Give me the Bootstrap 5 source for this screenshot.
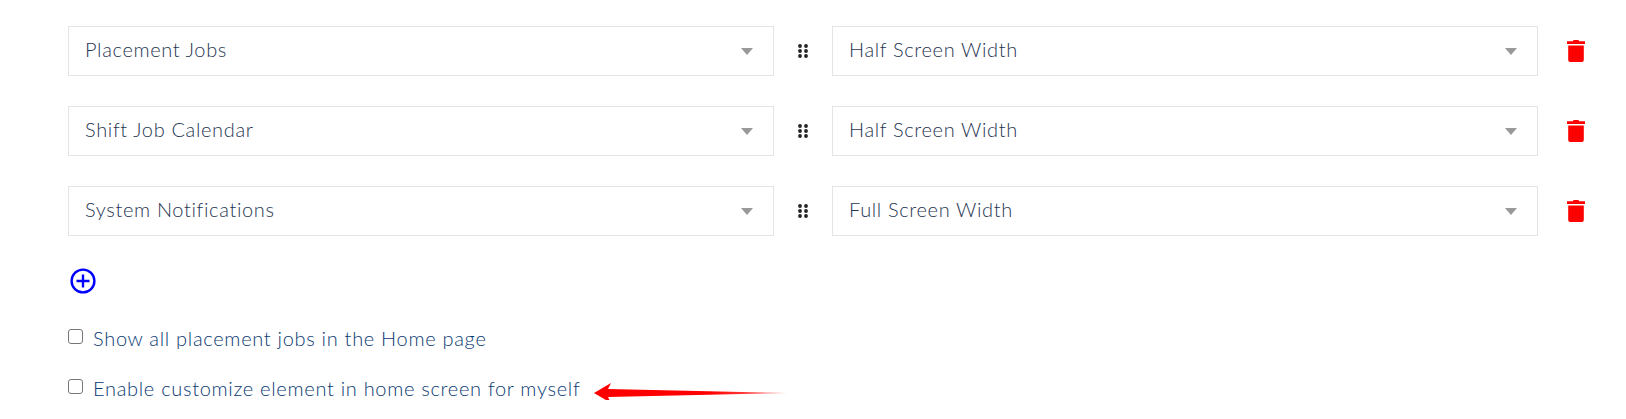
<!DOCTYPE html>
<html lang="en">
<head>
<meta charset="utf-8">
<title>Home screen elements</title>
<link href="https://cdn.jsdelivr.net/npm/bootstrap@5.3.0/dist/css/bootstrap.min.css" rel="stylesheet">
<style>
body{background:#fff;font-family:"Lato","Noto Sans",sans-serif;overflow:hidden}
.page-wrap{padding:26px 0 0 68px;width:1626px}
.elem-row{height:50px;margin-bottom:30px;display:flex;align-items:center}
.elem-select.form-select{height:50px;width:706px;flex:none;border:1px solid #e4e4e4;border-radius:0;padding:0 40px 4px 16px;font-size:20px;font-weight:300;color:#1f3552;letter-spacing:.65px;box-shadow:none;
background-image:url("data:image/svg+xml,%3Csvg xmlns='http://www.w3.org/2000/svg' width='12' height='7'%3E%3Cpath d='M0 0h12L6 7z' fill='%23999'/%3E%3C/svg%3E");background-size:12px 7px;background-position:right 20px center;background-repeat:no-repeat}
.elem-handle{width:58px;flex:none;display:flex;justify-content:center}
.elem-trash{margin-left:29px;flex:none;display:block}
.add-elem{display:block;padding:2px 0 0 2px;line-height:0}
.opt-row{display:flex;align-items:center;color:#0a3a72;font-size:20px;font-weight:300;letter-spacing:.7px;line-height:24px}
.opt-row .form-check-input{margin:0 10px 0 0;width:15px;height:15px;border:1px solid #767676;border-radius:3px;flex:none;position:relative;top:-2px}
.opt-first{margin-top:32px}
.opt-second{margin-top:26px}
.note-arrow{margin-left:14px;flex:none;position:relative;top:5px}
</style>
</head>
<body>
<div class="page-wrap">
  <div class="elem-row">
    <select class="form-select elem-select"><option>Placement Jobs</option></select>
    <div class="elem-handle"><svg width="10" height="14" viewBox="0 0 10 14"><g fill="#222"><circle cx="2" cy="2" r="1.9"/><circle cx="8" cy="2" r="1.9"/><circle cx="2" cy="7" r="1.9"/><circle cx="8" cy="7" r="1.9"/><circle cx="2" cy="12" r="1.9"/><circle cx="8" cy="12" r="1.9"/></g></svg></div>
    <select class="form-select elem-select"><option>Half Screen Width</option></select>
    <svg class="elem-trash" width="18" height="22" viewBox="0 0 18 22"><path fill="#f00" d="M6 1.2Q6 0 7 0h4q1 0 1 1.200h6V4H0V1.200zM1.200 5.500h15.600V20q0 2-2 2H3.200q-2 0-2-2z"/></svg>
  </div>
  <div class="elem-row">
    <select class="form-select elem-select"><option>Shift Job Calendar</option></select>
    <div class="elem-handle"><svg width="10" height="14" viewBox="0 0 10 14"><g fill="#222"><circle cx="2" cy="2" r="1.9"/><circle cx="8" cy="2" r="1.9"/><circle cx="2" cy="7" r="1.9"/><circle cx="8" cy="7" r="1.9"/><circle cx="2" cy="12" r="1.9"/><circle cx="8" cy="12" r="1.9"/></g></svg></div>
    <select class="form-select elem-select"><option>Half Screen Width</option></select>
    <svg class="elem-trash" width="18" height="22" viewBox="0 0 18 22"><path fill="#f00" d="M6 1.2Q6 0 7 0h4q1 0 1 1.200h6V4H0V1.200zM1.200 5.500h15.600V20q0 2-2 2H3.200q-2 0-2-2z"/></svg>
  </div>
  <div class="elem-row">
    <select class="form-select elem-select"><option>System Notifications</option></select>
    <div class="elem-handle"><svg width="10" height="14" viewBox="0 0 10 14"><g fill="#222"><circle cx="2" cy="2" r="1.9"/><circle cx="8" cy="2" r="1.9"/><circle cx="2" cy="7" r="1.9"/><circle cx="8" cy="7" r="1.9"/><circle cx="2" cy="12" r="1.9"/><circle cx="8" cy="12" r="1.9"/></g></svg></div>
    <select class="form-select elem-select"><option>Full Screen Width</option></select>
    <svg class="elem-trash" width="18" height="22" viewBox="0 0 18 22"><path fill="#f00" d="M6 1.2Q6 0 7 0h4q1 0 1 1.200h6V4H0V1.200zM1.200 5.500h15.600V20q0 2-2 2H3.200q-2 0-2-2z"/></svg>
  </div>
  <a class="add-elem" href="#" aria-label="Add element"><svg width="26" height="26" viewBox="0 0 26 26"><circle cx="13" cy="13" r="11.400" fill="none" stroke="#00f" stroke-width="2.400"/><path d="M13 6.500v13M6.500 13h13" stroke="#00f" stroke-width="2.400"/></svg></a>
  <label class="opt-row opt-first"><input class="form-check-input" type="checkbox">Show all placement jobs in the Home page</label>
  <label class="opt-row opt-second"><input class="form-check-input" type="checkbox">Enable customize element in home screen for myself<svg class="note-arrow" width="194" height="20" viewBox="0 0 194 20"><defs><linearGradient id="arrowFade" x1="0" x2="1" y1="0" y2="0"><stop offset="0" stop-color="#f00"/><stop offset=".6" stop-color="#f00"/><stop offset="1" stop-color="#f00" stop-opacity=".5"/></linearGradient></defs><path fill="url(#arrowFade)" d="M0 10 17 0 14 6 193 10 14 14 17 20z"/></svg></label>
</div>
<script src="https://cdn.jsdelivr.net/npm/bootstrap@5.3.0/dist/js/bootstrap.bundle.min.js"></script>
</body>
</html>
